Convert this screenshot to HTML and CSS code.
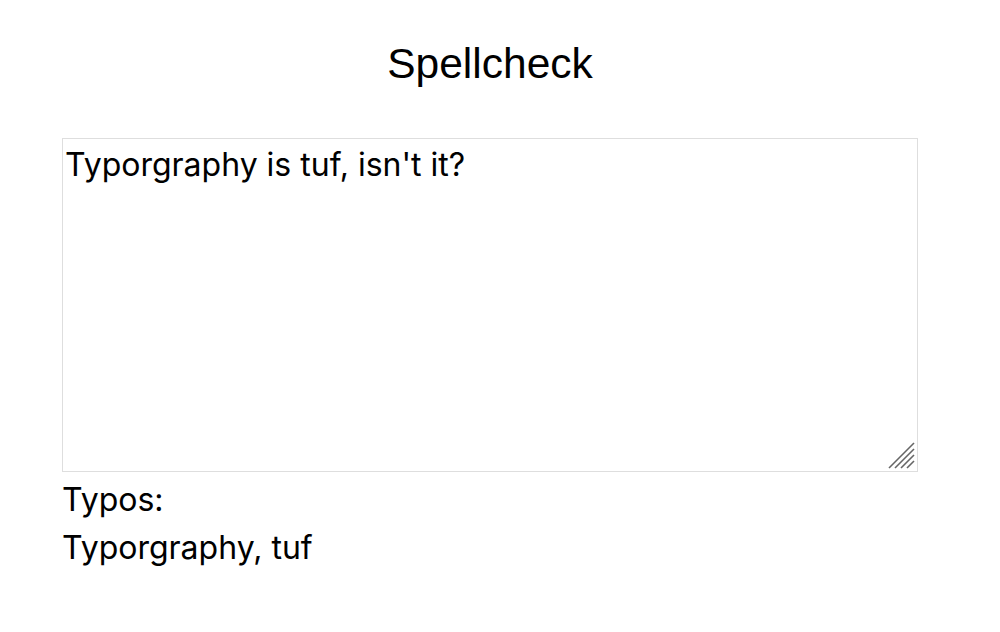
FILE: index.html
```html
<!DOCTYPE html>
<html>
<head>
<meta charset="utf-8">
<link rel="stylesheet" href="styles.css">
</head>
<body>
<main class="app">
  <h1 class="title">Spellcheck</h1>
  <div class="editor-wrap">
    <textarea class="editor" spellcheck="false">Typorgraphy is tuf, isn't it?</textarea>
    <svg class="grip" width="28" height="28" viewBox="0 0 28 28" aria-hidden="true">
      <g stroke="#666666" stroke-width="1.6" stroke-linecap="butt">
        <line x1="1" y1="27" x2="26" y2="2"/>
        <line x1="7" y1="27" x2="26" y2="8"/>
        <line x1="13" y1="27" x2="26" y2="14"/>
        <line x1="19" y1="27" x2="26" y2="20"/>
      </g>
    </svg>
  </div>
  <div class="label">Typos:</div>
  <div class="typos">Typorgraphy, tuf</div>
</main>
</body>
</html>
```
FILE: styles.css
```css
html, body {
  margin: 0;
  padding: 0;
  background: #fff;
}
.app {
  width: 856px;
  margin-left: 62px;
  font-family: Inter, "Liberation Sans", sans-serif;
  color: #000;
}
.title {
  margin: 0;
  padding-top: 40px;
  height: 138px;
  box-sizing: border-box;
  text-align: center;
  font-family: "Liberation Sans", Arial, sans-serif;
  font-weight: 400;
  font-size: 42.5px;
  line-height: 48px;
}
.editor-wrap {
  position: relative;
  width: 856px;
  height: 334px;
}
.editor {
  display: block;
  box-sizing: border-box;
  width: 856px;
  height: 334px;
  margin: 0;
  padding: 2px;
  border: 1px solid #dedede;
  font-family: Inter, sans-serif;
  font-size: 32px;
  line-height: 48px;
  color: #000;
  resize: none;
  outline: none;
  background: #fff;
}
.grip {
  position: absolute;
  right: 2px;
  bottom: 3px;
}
.label, .typos {
  font-size: 32px;
  line-height: 48px;
}
.label {
  margin-top: 4px;
}
```
